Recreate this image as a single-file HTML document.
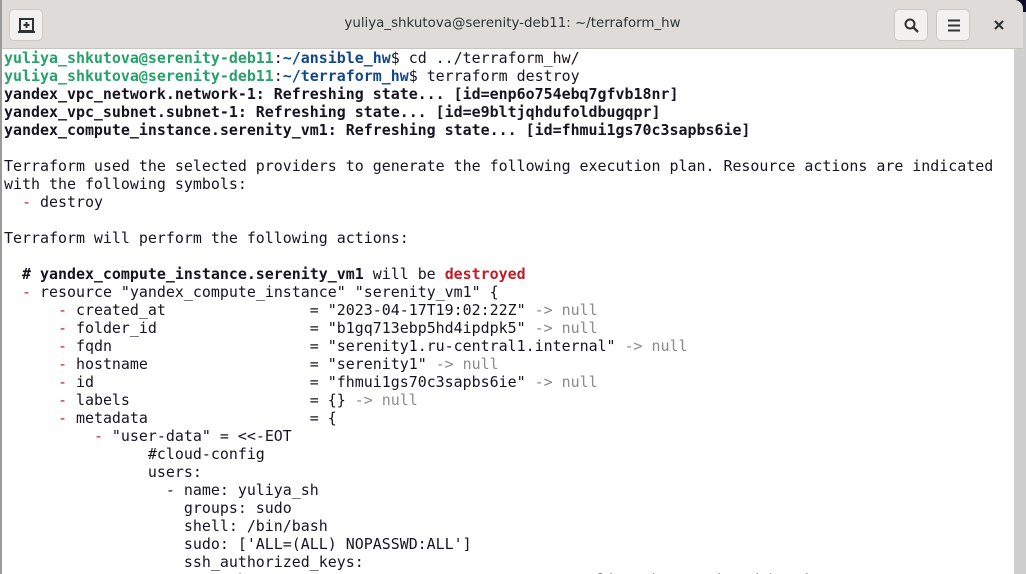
<!DOCTYPE html>
<html><head><meta charset="utf-8"><style>
*{margin:0;padding:0;box-sizing:border-box}
html,body{width:1026px;height:574px;overflow:hidden;background:#cfcfcf}
.topbg{position:absolute;left:880px;top:0;width:146px;height:12px;background:#0d0d2b}
.win{position:absolute;left:0;top:0;width:1023px;height:574px;border-left:2px solid #9a9a9a;border-radius:0 9px 0 0;overflow:hidden;background:#fff}
.hdr{position:absolute;left:0;top:0;right:0;height:49px;background:#dedbd8;border-bottom:1px solid #c8c4c0}
.btn{position:absolute;top:9px;width:34px;height:32px;background:#f2f1f0;border:1px solid #cdc9c5;border-radius:5px}
.title{position:absolute;left:0;right:0;top:16px;text-align:center;font:13.4px "DejaVu Sans",sans-serif;color:#2e3436}
.term{position:absolute;left:2px;top:49px;width:1010px;height:525px;background:#fff;font:14.95px/18px "DejaVu Sans Mono",monospace;color:#171421;white-space:pre}
.strip{position:absolute;left:1012px;top:49px;width:11px;height:525px;background:#cfcfcf}
.g{color:#26a269;font-weight:bold}.b{color:#12488b;font-weight:bold}
.B{font-weight:bold}.r{color:#c01c28}.rb{color:#c01c28;font-weight:bold}.n{color:#8b8b8b}
</style></head><body>
<div class="topbg"></div>
<div class="win">
<div class="hdr">
 <div class="btn" style="left:7px"><svg width="34" height="32" viewBox="0 0 34 32"><rect x="10" y="9" width="13" height="12" fill="none" stroke="#2e3436" stroke-width="2"/><path d="M16.5 12v6M13.5 15h6M8 22h17" stroke="#2e3436" stroke-width="2"/></svg></div>
 <div class="title">yuliya_shkutova@serenity-deb11: ~/terraform_hw</div>
 <div class="btn" style="left:892px"><svg width="34" height="32" viewBox="0 0 34 32"><circle cx="15" cy="14" r="4.5" fill="none" stroke="#2e3436" stroke-width="2"/><path d="M18.3 17.3l4 4" stroke="#2e3436" stroke-width="2.4" stroke-linecap="round"/></svg></div>
 <div class="btn" style="left:934px"><svg width="34" height="32" viewBox="0 0 34 32"><path d="M11 10.5h12M11 15.5h12M11 20.5h12" stroke="#2e3436" stroke-width="2"/></svg></div>
 <svg style="position:absolute;left:990px;top:18px" width="14" height="14" viewBox="0 0 14 14"><path d="M3 3l8 8M11 3l-8 8" stroke="#2e3436" stroke-width="2.2"/></svg>
</div>
<div class="term"><span class="g">yuliya_shkutova@serenity-deb11</span>:<span class="b">~/ansible_hw</span>$ cd ../terraform_hw/
<span class="g">yuliya_shkutova@serenity-deb11</span>:<span class="b">~/terraform_hw</span>$ terraform destroy
<span class="B">yandex_vpc_network.network-1: Refreshing state... [id=enp6o754ebq7gfvb18nr]</span>
<span class="B">yandex_vpc_subnet.subnet-1: Refreshing state... [id=e9bltjqhdufoldbugqpr]</span>
<span class="B">yandex_compute_instance.serenity_vm1: Refreshing state... [id=fhmui1gs70c3sapbs6ie]</span>

Terraform used the selected providers to generate the following execution plan. Resource actions are indicated
with the following symbols:
  <span class="r">-</span> destroy

Terraform will perform the following actions:

<span class="B">  # yandex_compute_instance.serenity_vm1</span> will be <span class="rb">destroyed</span>
  <span class="r">-</span> resource "yandex_compute_instance" "serenity_vm1" {
      <span class="r">-</span> created_at                = "2023-04-17T19:02:22Z" <span class="n">-&gt; null</span>
      <span class="r">-</span> folder_id                 = "b1gq713ebp5hd4ipdpk5" <span class="n">-&gt; null</span>
      <span class="r">-</span> fqdn                      = "serenity1.ru-central1.internal" <span class="n">-&gt; null</span>
      <span class="r">-</span> hostname                  = "serenity1" <span class="n">-&gt; null</span>
      <span class="r">-</span> id                        = "fhmui1gs70c3sapbs6ie" <span class="n">-&gt; null</span>
      <span class="r">-</span> labels                    = {} <span class="n">-&gt; null</span>
      <span class="r">-</span> metadata                  = {
          <span class="r">-</span> "user-data" = &lt;&lt;-EOT
                #cloud-config
                users:
                  - name: yuliya_sh
                    groups: sudo
                    shell: /bin/bash
                    sudo: ['ALL=(ALL) NOPASSWD:ALL']
                    ssh_authorized_keys:
                      - ssh-rsa AAAAB3NzaC1yc2EAAAADAQABAAABgQC yuliya_sh@serenity-deb11 key
</div>
<div class="strip"></div>
</div>
</body></html>
